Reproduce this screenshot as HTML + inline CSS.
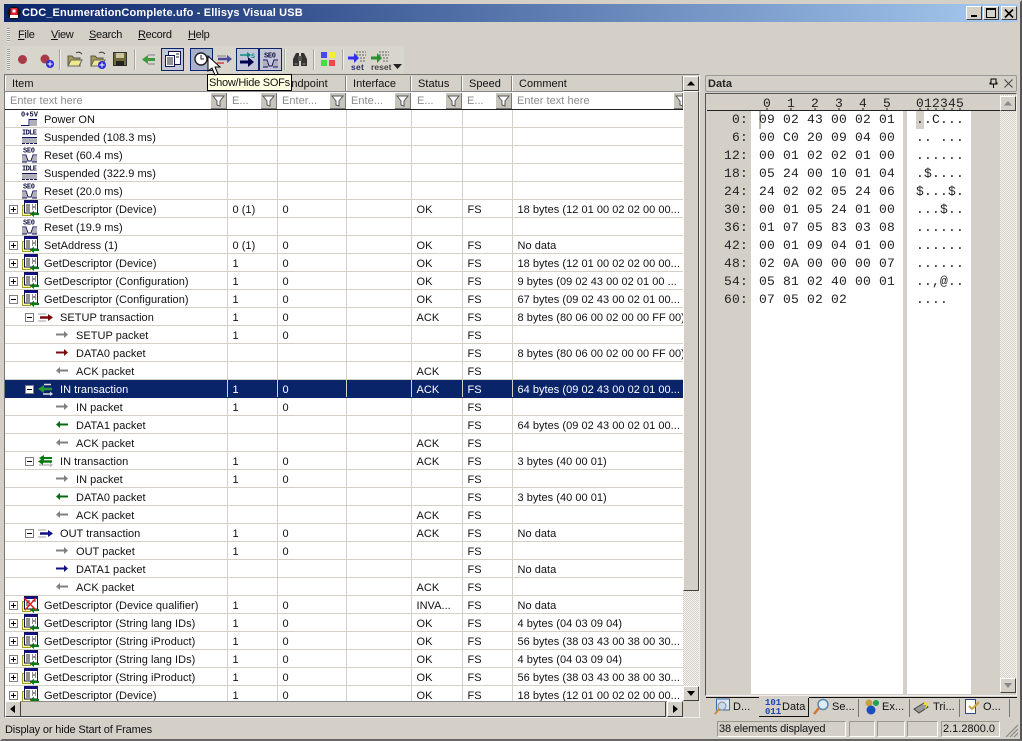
<!DOCTYPE html>
<html><head><meta charset="utf-8"><style>
html,body{margin:0;padding:0;width:1022px;height:741px;overflow:hidden;background:#d4d0c8}
body{position:relative;font:11px/13px "Liberation Sans",sans-serif;color:#111;letter-spacing:.03px}
.a{position:absolute}
svg{position:absolute;overflow:visible}
#title{left:4px;top:4px;width:1014px;height:18px;background:linear-gradient(90deg,#0a246a,#a6caf0);color:#fff;font-weight:bold;font-size:11px;line-height:18px;letter-spacing:.15px}
.wb{top:6px;width:16px;height:14px;background:#d4d0c8;border:1px solid;border-color:#fff #404040 #404040 #fff;box-sizing:border-box}
.menu{top:29px;font-size:11px;letter-spacing:-.3px}
.menu u{text-decoration:underline}
.sep{top:49px;width:0;height:21px;border-left:1px solid #a8a59e;border-right:1px solid #eee}
.sel{top:48px;width:23px;height:23px;box-sizing:border-box;border:1px solid #0a246a;background:#c4c6d8}
#wrap{left:5px;top:110px;width:678px;height:592px;overflow:hidden;background:#fff}
table{border-collapse:collapse;table-layout:fixed;width:678px}
#wrap td{height:13px;padding:4px 0 0 5px;border-right:1px solid #d4d0c8;border-bottom:1px solid #d4d0c8;white-space:nowrap;overflow:hidden;position:relative;line-height:13px;box-sizing:content-box}
#wrap td:first-child{padding-left:39px}
#wrap tr.l1 td:first-child{padding-left:55px}
#wrap tr.l2 td:first-child{padding-left:71px}
tr.s td{background:#0a246a;color:#fff;border-color:#0a246a #d4d0c8 #0a246a #0a246a!important}
.hd{top:76px;height:15px;line-height:17px;padding-left:6px;box-sizing:border-box;border-right:1px solid #808080;border-left:1px solid #fff}
.f{top:92px;height:17px;line-height:19px;background:#fff;color:#8a8a8a;padding-left:5px;box-sizing:border-box;overflow:hidden}
.fb{top:93px;width:16px;height:16px;background:#c8c5bd;border-right:1px solid #777;border-bottom:1px solid #777;box-sizing:border-box}
.hx{font:13px/18px "Liberation Mono",monospace;letter-spacing:.2px;color:#222;white-space:pre}
.tab{top:701px;font-size:11px}
.pn{top:721px;height:16px;border:1px solid;border-color:#9a978f #fff #fff #9a978f;box-sizing:border-box;line-height:15px;padding-left:1px;letter-spacing:-.15px}
.ts{width:0;height:18px;top:699px;border-left:1px solid #777}
.mn{font:bold 7.5px/8px "Liberation Mono",monospace;letter-spacing:0}
</style></head><body>
<svg width="0" height="0" style="position:absolute">
<defs>
<symbol id="p" viewBox="0 0 9 9"><rect x=".5" y=".5" width="8" height="8" fill="#fff" stroke="#808080"/><path d="M2 4.500h5M4.500 2v5" stroke="#000"/></symbol>
<symbol id="m" viewBox="0 0 9 9"><rect x=".5" y=".5" width="8" height="8" fill="#fff" stroke="#808080"/><path d="M2 4.500h5" stroke="#000"/></symbol>
<symbol id="d" viewBox="0 0 17 17"><rect x=".5" y="5.500" width="8" height="10" fill="#ffffa0" stroke="#a0a020"/><rect x="2.500" y=".5" width="13" height="12.500" fill="#fff" stroke="#101050"/><rect x="2.500" y=".5" width="13" height="2.500" fill="#101080"/><path d="M4 5h4M4 7h4M4 9h4M4 11h4M10 5h1M13 5h1M10 7h4M10 9h1M13 9h1" stroke="#222"/><path d="M17 14h-6" stroke="#0a7a10" stroke-width="2.200"/><path d="M12 10.500l-4 3.500 4 3z" fill="#0a7a10"/></symbol>
<symbol id="x" viewBox="0 0 17 17"><rect x=".5" y="5.500" width="8" height="10" fill="#ffffa0" stroke="#a0a020"/><rect x="2.500" y=".5" width="13" height="12.500" fill="#fff" stroke="#101050"/><rect x="2.500" y=".5" width="13" height="2.500" fill="#101080"/><path d="M4 5h4M4 7h4M4 9h4M10 5h4" stroke="#222"/><path d="M17 14h-6" stroke="#0a7a10" stroke-width="2.200"/><path d="M12 10.500l-4 3.500 4 3z" fill="#0a7a10"/><path d="M2 2l12 12M14 2L3 14" stroke="#e02020" stroke-width="1.500"/></symbol>
<symbol id="seo" viewBox="0 0 17 17"><text x="2" y="6.500" style="font:bold 7px 'Liberation Mono',monospace" fill="#101040" textLength="12">SE0</text><path d="M1 9h4l2 6h3l2-6h4" fill="none" stroke="#101060"/><path d="M1 10h4l1.500 6H1zM16 10h-4l-1.500 6H16z" fill="#b0b0b8"/><path d="M1 16h5M11 16h5" stroke="#101060"/></symbol>
<symbol id="idle" viewBox="0 0 17 17"><text x="1" y="6.500" style="font:bold 7px 'Liberation Mono',monospace" fill="#101040" textLength="15">IDLE</text><rect x="1" y="10" width="15" height="5" fill="#b0b0b8"/><path d="M1 9.500h15" stroke="#101060"/><path d="M1 15.500h15" stroke="#101060" stroke-dasharray="3 1"/></symbol>
<symbol id="pw" viewBox="0 0 17 17"><text x="0" y="6.500" style="font:bold 7px 'Liberation Mono',monospace" fill="#101040" textLength="17">0+5V</text><rect x="9" y="10" width="7" height="6" fill="#b0b0b8"/><path d="M0 15.500h8V9.500h8" fill="none" stroke="#101060"/></symbol>
<symbol id="gr" viewBox="0 0 12 7"><path d="M12 3.500H3" stroke="#808080" stroke-width="2"/><path d="M4 0L0 3.500 4 7z" fill="#808080"/></symbol>
<symbol id="ra" viewBox="0 0 12 7"><path d="M0 3.500h9" stroke="#808080" stroke-width="2"/><path d="M8 0l4 3.500L8 7z" fill="#808080"/></symbol>
<symbol id="rd" viewBox="0 0 12 7"><path d="M0 3.500h9" stroke="#7a0c10" stroke-width="2"/><path d="M8 0l4 3.500L8 7z" fill="#7a0c10"/></symbol>
<symbol id="gn" viewBox="0 0 12 7"><path d="M12 3.500H3" stroke="#0a6a10" stroke-width="2"/><path d="M4 0L0 3.500 4 7z" fill="#0a6a10"/></symbol>
<symbol id="bl" viewBox="0 0 12 7"><path d="M0 3.500h9" stroke="#101080" stroke-width="2"/><path d="M8 0l4 3.500L8 7z" fill="#101080"/></symbol>
<symbol id="tg" viewBox="0 0 15 13"><path d="M14 3H5" stroke="#0a7a10" stroke-width="2"/><path d="M6 0L1 3l5 3z" fill="#0a7a10"/><path d="M12 10H1" stroke="#bbb" stroke-width="1.500"/><path d="M12 7.500l3 2.500-3 2.500z" fill="#bbb"/><path d="M14 6.500H4" stroke="#0a7a10" stroke-width="2.500"/><path d="M5 3L0 6.500 5 10z" fill="#0a7a10"/></symbol>
<symbol id="ts" viewBox="0 0 15 13"><path d="M0 3h8M0 10h8" stroke="#c0c0c0" stroke-width="1.500"/><path d="M2 6.500h10" stroke="#7a0c10" stroke-width="2.500"/><path d="M10 3l5 3.500-5 3.500z" fill="#7a0c10"/></symbol>
<symbol id="tsel" viewBox="0 0 15 13"><path d="M14 6H5" stroke="#2a9a30" stroke-width="2.500"/><path d="M6 2L0 6l6 4z" fill="#2a9a30"/><path d="M6 1.500h7M5 11h8" stroke="#ddd" stroke-width="1.500"/><path d="M12 8.500l3 2.500-3 2z" fill="#ddd"/></symbol>
<symbol id="tblu" viewBox="0 0 15 13"><path d="M0 3h8M0 10h8" stroke="#c0c0c0" stroke-width="1.500"/><path d="M2 6.500h10" stroke="#101080" stroke-width="2.500"/><path d="M10 3l5 3.500-5 3.500z" fill="#101080"/></symbol>
<symbol id="fl" viewBox="0 0 13 13"><path d="M1 2h11L8 7v5l-3-1V7z" fill="#fff" stroke="#555"/></symbol>
</defs></svg>

<div class="a" style="left:0;top:0;width:1022px;height:741px;box-sizing:border-box;border:2px solid #d4d0c8;border-right-color:#555;border-bottom-color:#666"></div>
<div class="a" id="title"><span style="position:absolute;left:18px;white-space:nowrap">CDC_EnumerationComplete.ufo - Ellisys Visual USB</span>
<svg style="left:3px;top:2px" width="14" height="14"><circle cx="7" cy="7" r="6.500" fill="#111"/><rect x="3.500" y="2" width="7" height="7" fill="#e02030"/><rect x="5.500" y="3.500" width="3" height="3" fill="#fff"/><path d="M3 9h8v3H3z" fill="#fff"/></svg></div>
<div class="a wb" style="left:966px"><div class="a" style="left:4px;top:8px;width:6px;height:2px;background:#000"></div></div>
<div class="a wb" style="left:983px"><div class="a" style="left:2px;top:1px;width:10px;height:10px;box-sizing:border-box;border:1px solid #000;border-top-width:2px"></div></div>
<div class="a wb" style="left:1001px"><svg style="left:2px;top:2px" width="10" height="9"><path d="M1 .5l8 8M9 .5l-8 8" stroke="#000" stroke-width="1.600"/></svg></div>

<div class="a" style="left:7px;top:28px;width:3px;height:14px;background:repeating-linear-gradient(#999 0 1px,#eee 1px 2px)"></div>
<div class="a menu" style="left:18px"><u>F</u>ile</div>
<div class="a menu" style="left:51px"><u>V</u>iew</div>
<div class="a menu" style="left:89px"><u>S</u>earch</div>
<div class="a menu" style="left:138px"><u>R</u>ecord</div>
<div class="a menu" style="left:188px"><u>H</u>elp</div>

<div class="a" style="left:5px;top:46px;width:399px;height:27px;background:#d8d5cd"></div>
<div class="a" style="left:7px;top:49px;width:3px;height:21px;background:repeating-linear-gradient(#999 0 1px,#eee 1px 2px)"></div>
<div class="a sep" style="left:59px"></div><div class="a sep" style="left:134px"></div><div class="a sep" style="left:284px"></div><div class="a sep" style="left:313px"></div><div class="a sep" style="left:342px"></div>
<svg style="left:0;top:0" width="410" height="75">
<circle cx="22.500" cy="59.500" r="4.500" fill="#a83a48"/><circle cx="45" cy="59" r="4.500" fill="#a83a48"/><circle cx="50" cy="64" r="4" fill="#2828d8"/><path d="M47.500 64h5M50 61.500v5" stroke="#fff"/>
<path d="M68 56h4l2 2h6v8H68z" fill="#a89a50" stroke="#555"/><path d="M68 66l3-6h11l-3 6z" fill="#f0e88c" stroke="#666"/><path d="M76 53q3-2 6 1" fill="none" stroke="#444"/>
<path d="M91 56h4l2 2h6v8H91z" fill="#a89a50" stroke="#555"/><path d="M91 66l3-6h11l-3 6z" fill="#f0e88c" stroke="#666"/><path d="M99 53q3-2 6 1" fill="none" stroke="#444"/><circle cx="102" cy="65" r="4" fill="#2828d8"/><path d="M99.500 65h5M102 62.500v5" stroke="#fff"/>
<rect x="113.500" y="52.500" width="13" height="13" fill="#6e6a3a" stroke="#333"/><rect x="116" y="53" width="8" height="5" fill="#c8c5a0"/><rect x="116" y="61" width="8" height="5" fill="#222"/>
<path d="M148 55h7M148 64h7" stroke="#aaa" stroke-width="2"/><path d="M147 59.500h8" stroke="#3a9a40" stroke-width="3"/><path d="M148 55l-6 4.500 6 4.500z" fill="#3a9a40"/>
</svg>
<div class="a sel" style="left:161px"></div>
<svg style="left:165px;top:51px" width="16" height="16"><rect x="3.500" y=".5" width="12" height="13" fill="#fff" stroke="#101050"/><rect x=".5" y="4.500" width="9" height="11" fill="#fff" stroke="#101050"/><path d="M2 7h6M2 9h6M2 11h6M2 13h6M11 3h3M11 6h3" stroke="#222"/></svg>
<div class="a sel" style="left:190px;background:#a9b0cc"></div>
<svg style="left:194px;top:51px" width="16" height="16"><circle cx="7" cy="8" r="6" fill="#fff" stroke="#222" stroke-width="1.400"/><path d="M7 4v4h3" fill="none" stroke="#222"/></svg>
<svg style="left:216px;top:53px" width="16" height="14"><path d="M1 3h9" stroke="#aaa" stroke-width="2"/><path d="M2 6h10" stroke="#4a4a9a" stroke-width="2.500"/><path d="M11 2l5 4-5 4z" fill="#4a4a9a"/><path d="M1 10h7" stroke="#d04040" stroke-width="1.500"/></svg>
<div class="a sel" style="left:236px"></div>
<svg style="left:239px;top:51px" width="18" height="17"><path d="M1 4h8" stroke="#0a8a80" stroke-width="1.500"/><path d="M8 1l4 3-4 3z" fill="#0a8a80"/><text x="12" y="7" style="font:bold 6px 'Liberation Sans'" fill="#0a8a80">S</text><path d="M1 11h10" stroke="#000050" stroke-width="3"/><path d="M9 6l6 5-6 5z" fill="#000050"/></svg>
<div class="a sel" style="left:259px"></div>
<svg style="left:262px;top:51px" width="17" height="17"><use href="#seo"/></svg>
<svg style="left:292px;top:52px" width="16" height="15"><path d="M1 14V7l3-6h3v13zM15 14V7l-3-6H9v13z" fill="#333"/><rect x="6" y="4" width="4" height="5" fill="#555"/><path d="M2.500 12h3M10.500 12h3" stroke="#999"/></svg>
<svg style="left:321px;top:52px" width="14" height="14"><rect width="6" height="6" fill="#4848e8"/><rect x="8" width="6" height="6" fill="#f4f030"/><rect y="8" width="6" height="6" fill="#40e040"/><rect x="8" y="8" width="6" height="6" fill="#f04848"/></svg>
<svg style="left:348px;top:50px" width="20" height="22"><path d="M0 8h7" stroke="#3030f0" stroke-width="3"/><path d="M6 3l5 5-5 5z" fill="#3030f0"/><path d="M8 2h10M8 5h10M12 8h6M12 11h6" stroke="#666" stroke-dasharray="2 1"/></svg>
<svg style="left:371px;top:50px" width="20" height="22"><path d="M0 8h7" stroke="#2a9030" stroke-width="3"/><path d="M6 3l5 5-5 5z" fill="#2a9030"/><path d="M8 2h10M8 5h10M12 8h6M12 11h6" stroke="#666" stroke-dasharray="2 1"/></svg>
<div class="a" style="left:351px;top:62px;font-size:8.500px;line-height:10px;color:#2a2a70;font-weight:bold;letter-spacing:.3px">set</div>
<div class="a" style="left:371px;top:62px;font-size:8.500px;line-height:10px;color:#444;font-weight:bold">reset</div>
<svg style="left:393px;top:64px" width="9" height="5"><path d="M0 0h9L4.500 5z" fill="#222"/></svg>

<div class="a" style="left:4px;top:74px;width:696px;height:644px;box-sizing:border-box;border:1px solid #777;border-right-color:#eee;border-bottom-color:#eee"></div>
<div class="a" style="left:5px;top:75px;width:678px;height:17px;background:#d4d0c8;border-bottom:1px solid #888;box-sizing:border-box"></div>
<div class="a hd" style="left:5px;width:222px">Item</div>
<div class="a hd" style="left:227px;width:50px"></div>
<div class="a hd" style="left:277px;width:69px">Endpoint</div>
<div class="a hd" style="left:346px;width:65px">Interface</div>
<div class="a hd" style="left:411px;width:51px">Status</div>
<div class="a hd" style="left:462px;width:50px">Speed</div>
<div class="a hd" style="left:512px;width:171px">Comment</div>

<div class="a" style="left:5px;top:92px;width:678px;height:18px;background:#fff;border-bottom:1px solid #222;box-sizing:border-box"></div>
<div class="a f" style="left:5px;width:205px">Enter text here</div><div class="a fb" style="left:211px"><svg style="left:1px;top:1px" width="13" height="13"><use href="#fl"/></svg></div>
<div class="a f" style="left:227px;width:33px">E...</div><div class="a fb" style="left:261px"><svg style="left:1px;top:1px" width="13" height="13"><use href="#fl"/></svg></div>
<div class="a f" style="left:277px;width:52px">Enter...</div><div class="a fb" style="left:330px"><svg style="left:1px;top:1px" width="13" height="13"><use href="#fl"/></svg></div>
<div class="a f" style="left:346px;width:48px">Ente...</div><div class="a fb" style="left:395px"><svg style="left:1px;top:1px" width="13" height="13"><use href="#fl"/></svg></div>
<div class="a f" style="left:412px;width:33px">E...</div><div class="a fb" style="left:446px"><svg style="left:1px;top:1px" width="13" height="13"><use href="#fl"/></svg></div>
<div class="a f" style="left:462px;width:33px">E...</div><div class="a fb" style="left:496px"><svg style="left:1px;top:1px" width="13" height="13"><use href="#fl"/></svg></div>
<div class="a f" style="left:512px;width:155px">Enter text here</div><div class="a fb" style="left:674px;width:9px;overflow:hidden"><svg style="left:1px;top:1px" width="13" height="13"><use href="#fl"/></svg></div>

<div class="a" id="wrap"><table>
<colgroup><col style="width:222px"><col style="width:50px"><col style="width:69px"><col style="width:65px"><col style="width:51px"><col style="width:50px"><col style="width:171px"></colgroup>
<tr><td>Power ON<td><td><td><td><td><td></tr>
<tr><td>Suspended (108.3 ms)<td><td><td><td><td><td></tr>
<tr><td>Reset (60.4 ms)<td><td><td><td><td><td></tr>
<tr><td>Suspended (322.9 ms)<td><td><td><td><td><td></tr>
<tr><td>Reset (20.0 ms)<td><td><td><td><td><td></tr>
<tr><td>GetDescriptor (Device)<td>0 (1)<td>0<td><td>OK<td>FS<td>18 bytes (12 01 00 02 02 00 00...</tr>
<tr><td>Reset (19.9 ms)<td><td><td><td><td><td></tr>
<tr><td>SetAddress (1)<td>0 (1)<td>0<td><td>OK<td>FS<td>No data</tr>
<tr><td>GetDescriptor (Device)<td>1<td>0<td><td>OK<td>FS<td>18 bytes (12 01 00 02 02 00 00...</tr>
<tr><td>GetDescriptor (Configuration)<td>1<td>0<td><td>OK<td>FS<td>9 bytes (09 02 43 00 02 01 00 ...</tr>
<tr><td>GetDescriptor (Configuration)<td>1<td>0<td><td>OK<td>FS<td>67 bytes (09 02 43 00 02 01 00...</tr>
<tr class="l1"><td>SETUP transaction<td>1<td>0<td><td>ACK<td>FS<td>8 bytes (80 06 00 02 00 00 FF 00)</tr>
<tr class="l2"><td>SETUP packet<td>1<td>0<td><td><td>FS<td></tr>
<tr class="l2"><td>DATA0 packet<td><td><td><td><td>FS<td>8 bytes (80 06 00 02 00 00 FF 00)</tr>
<tr class="l2"><td>ACK packet<td><td><td><td>ACK<td>FS<td></tr>
<tr class="l1 s"><td>IN transaction<td>1<td>0<td><td>ACK<td>FS<td>64 bytes (09 02 43 00 02 01 00...</tr>
<tr class="l2"><td>IN packet<td>1<td>0<td><td><td>FS<td></tr>
<tr class="l2"><td>DATA1 packet<td><td><td><td><td>FS<td>64 bytes (09 02 43 00 02 01 00...</tr>
<tr class="l2"><td>ACK packet<td><td><td><td>ACK<td>FS<td></tr>
<tr class="l1"><td>IN transaction<td>1<td>0<td><td>ACK<td>FS<td>3 bytes (40 00 01)</tr>
<tr class="l2"><td>IN packet<td>1<td>0<td><td><td>FS<td></tr>
<tr class="l2"><td>DATA0 packet<td><td><td><td><td>FS<td>3 bytes (40 00 01)</tr>
<tr class="l2"><td>ACK packet<td><td><td><td>ACK<td>FS<td></tr>
<tr class="l1"><td>OUT transaction<td>1<td>0<td><td>ACK<td>FS<td>No data</tr>
<tr class="l2"><td>OUT packet<td>1<td>0<td><td><td>FS<td></tr>
<tr class="l2"><td>DATA1 packet<td><td><td><td><td>FS<td>No data</tr>
<tr class="l2"><td>ACK packet<td><td><td><td>ACK<td>FS<td></tr>
<tr><td>GetDescriptor (Device qualifier)<td>1<td>0<td><td>INVA...<td>FS<td>No data</tr>
<tr><td>GetDescriptor (String lang IDs)<td>1<td>0<td><td>OK<td>FS<td>4 bytes (04 03 09 04)</tr>
<tr><td>GetDescriptor (String iProduct)<td>1<td>0<td><td>OK<td>FS<td>56 bytes (38 03 43 00 38 00 30...</tr>
<tr><td>GetDescriptor (String lang IDs)<td>1<td>0<td><td>OK<td>FS<td>4 bytes (04 03 09 04)</tr>
<tr><td>GetDescriptor (String iProduct)<td>1<td>0<td><td>OK<td>FS<td>56 bytes (38 03 43 00 38 00 30...</tr>
<tr><td>GetDescriptor (Device)<td>1<td>0<td><td>OK<td>FS<td>18 bytes (12 01 00 02 02 00 00...</tr>
</table>
<svg style="left:0;top:0" width="80" height="592">
<use href="#pw" x="16" y="0" width="17" height="17"/>
<use href="#idle" x="16" y="18" width="17" height="17"/>
<use href="#seo" x="16" y="36" width="17" height="17"/>
<use href="#idle" x="16" y="54" width="17" height="17"/>
<use href="#seo" x="16" y="72" width="17" height="17"/>
<use href="#p" x="4" y="95" width="9" height="9"/><use href="#d" x="17" y="90" width="17" height="17"/>
<use href="#seo" x="16" y="108" width="17" height="17"/>
<use href="#p" x="4" y="131" width="9" height="9"/><use href="#d" x="17" y="126" width="17" height="17"/>
<use href="#p" x="4" y="149" width="9" height="9"/><use href="#d" x="17" y="144" width="17" height="17"/>
<use href="#p" x="4" y="167" width="9" height="9"/><use href="#d" x="17" y="162" width="17" height="17"/>
<use href="#m" x="4" y="185" width="9" height="9"/><use href="#d" x="17" y="180" width="17" height="17"/>
<use href="#m" x="20" y="203" width="9" height="9"/><use href="#ts" x="33" y="201" width="15" height="13"/>
<use href="#ra" x="51" y="221" width="12" height="7"/>
<use href="#rd" x="51" y="239" width="12" height="7"/>
<use href="#gr" x="51" y="257" width="12" height="7"/>
<use href="#m" x="20" y="275" width="9" height="9"/><use href="#tsel" x="33" y="273" width="15" height="13"/>
<use href="#ra" x="51" y="293" width="12" height="7"/>
<use href="#gn" x="51" y="311" width="12" height="7"/>
<use href="#gr" x="51" y="329" width="12" height="7"/>
<use href="#m" x="20" y="347" width="9" height="9"/><use href="#tg" x="33" y="345" width="15" height="13"/>
<use href="#ra" x="51" y="365" width="12" height="7"/>
<use href="#gn" x="51" y="383" width="12" height="7"/>
<use href="#gr" x="51" y="401" width="12" height="7"/>
<use href="#m" x="20" y="419" width="9" height="9"/><use href="#tblu" x="33" y="417" width="15" height="13"/>
<use href="#ra" x="51" y="437" width="12" height="7"/>
<use href="#bl" x="51" y="455" width="12" height="7"/>
<use href="#gr" x="51" y="473" width="12" height="7"/>
<use href="#p" x="4" y="491" width="9" height="9"/><use href="#x" x="17" y="486" width="17" height="17"/>
<use href="#p" x="4" y="509" width="9" height="9"/><use href="#d" x="17" y="504" width="17" height="17"/>
<use href="#p" x="4" y="527" width="9" height="9"/><use href="#d" x="17" y="522" width="17" height="17"/>
<use href="#p" x="4" y="545" width="9" height="9"/><use href="#d" x="17" y="540" width="17" height="17"/>
<use href="#p" x="4" y="563" width="9" height="9"/><use href="#d" x="17" y="558" width="17" height="17"/>
<use href="#p" x="4" y="581" width="9" height="9"/><use href="#d" x="17" y="576" width="17" height="17"/>
</svg></div>

<!-- vertical scrollbar -->
<div class="a" style="left:683px;top:76px;width:16px;height:625px;background:repeating-conic-gradient(#d4d0c8 0 25%,#f4f3ef 0 50%) 0 0/2px 2px"></div>
<div class="a wb" style="left:683px;top:76px;height:15px"><svg style="left:3px;top:4px" width="8" height="5"><path d="M0 4.500h8L4 0z" fill="#000"/></svg></div>
<div class="a" style="left:683px;top:91px;width:16px;height:500px;background:#d4d0c8;box-sizing:border-box;border:1px solid;border-color:#fff #404040 #404040 #fff"></div>
<div class="a wb" style="left:683px;top:686px;height:15px"><svg style="left:3px;top:4px" width="8" height="5"><path d="M0 0h8L4 5z" fill="#000"/></svg></div>
<!-- horizontal scrollbar -->
<div class="a" style="left:5px;top:701px;width:678px;height:16px;background:#d4d0c8;border-top:1px solid #888;box-sizing:border-box"></div>
<div class="a wb" style="left:5px;top:701px;height:16px"><svg style="left:4px;top:3px" width="5" height="8"><path d="M5 0v8L0 4z" fill="#000"/></svg></div>
<div class="a" style="left:21px;top:702px;width:645px;height:15px;box-sizing:border-box;border-bottom:1px solid #404040;border-right:1px solid #404040"></div>
<div class="a wb" style="left:667px;top:701px;height:16px"><svg style="left:5px;top:3px" width="5" height="8"><path d="M0 0v8l5-4z" fill="#000"/></svg></div>

<!-- Tooltip -->
<div class="a" style="left:207px;top:74px;width:85px;height:17px;background:#ffffe1;border:1px solid #000;box-sizing:border-box;line-height:17px;padding-left:1px;white-space:nowrap;letter-spacing:-.25px">Show/Hide SOFs</div>
<svg style="left:207px;top:55px" width="14" height="21"><path d="M1 1v15l4-3 3 7 3-1-3-7h5z" fill="#fff" stroke="#000"/></svg>

<!-- Data pane -->
<div class="a" style="left:705px;top:75px;width:312px;height:17px;border:1px solid #999;box-sizing:border-box;border-radius:2px"></div>
<div class="a" style="left:708px;top:78px;font-weight:bold;font-size:11px;color:#222">Data</div>
<svg style="left:989px;top:78px" width="9" height="10"><path d="M2 1h5v4h1v1H1V5h1zM4.500 6v4" stroke="#000" fill="none"/></svg>
<svg style="left:1004px;top:79px" width="9" height="9"><path d="M.5.5l8 8M8.500.5l-8 8" stroke="#444"/></svg>
<div class="a" style="left:705px;top:93px;width:312px;height:603px;box-sizing:border-box;border:1px solid #555;border-right-color:#eee;border-bottom-color:#eee"></div>
<div class="a" style="left:707px;top:95px;width:293px;height:16px;background:#d4d0c8;border-bottom:1px solid #222;box-sizing:border-box"></div>
<div class="a" style="left:751px;top:111px;width:152px;height:583px;background:#fff"></div>
<div class="a" style="left:907px;top:111px;width:64px;height:583px;background:#fff"></div>
<div class="a" style="left:1000px;top:95px;width:16px;height:598px;background:repeating-conic-gradient(#d4d0c8 0 25%,#f4f3ef 0 50%) 0 0/2px 2px"></div>
<div class="a wb" style="left:1000px;top:96px;height:15px"><svg style="left:3px;top:4px" width="8" height="5"><path d="M0 4.500h8L4 0z" fill="#888"/></svg></div>
<div class="a wb" style="left:1000px;top:678px;height:15px"><svg style="left:3px;top:4px" width="8" height="5"><path d="M0 0h8L4 5z" fill="#888"/></svg></div>
<div class="a hx" style="left:763px;top:95px">0  1  2  3  4  5</div>
<div class="a hx" style="left:916px;top:95px">012345</div>
<svg style="left:0;top:0" width="1000" height="115"><path d="M767 108v3M791 108v3M815 108v3M839 108v3M863 108v3M887 108v3M920 108v3M928 108v3M936 108v3M944 108v3M952 108v3M960 108v3" stroke="#222"/></svg>
<div class="a" style="left:916px;top:111px;width:8px;height:18px;background:#d4d0c8"></div>
<div class="a" style="left:759px;top:111px;width:2px;height:18px;background:#b8b5ad"></div>
<div class="a hx" style="left:707px;top:111px;width:41px;text-align:right">0:
6:
12:
18:
24:
30:
36:
42:
48:
54:
60:</div>
<div class="a hx" style="left:759px;top:111px">09 02 43 00 02 01
00 C0 20 09 04 00
00 01 02 02 01 00
05 24 00 10 01 04
24 02 02 05 24 06
00 01 05 24 01 00
01 07 05 83 03 08
00 01 09 04 01 00
02 0A 00 00 00 07
05 81 02 40 00 01
07 05 02 02</div>
<div class="a hx" style="left:916px;top:111px">..C...
.. ...
......
.$....
$...$.
...$..
......
......
......
..,@..
....</div>

<!-- Tabs -->
<div class="a" style="left:706px;top:697px;width:311px;height:1px;background:#111"></div>
<div class="a" style="left:759px;top:697px;width:50px;height:20px;background:#d4d0c8;border-bottom:1px solid #111;border-right:1px solid #111;box-sizing:border-box"></div>
<div class="a" style="left:759px;top:697px;width:50px;height:1px;background:#d4d0c8"></div>
<div class="a ts" style="left:858px"></div><div class="a ts" style="left:909px"></div><div class="a ts" style="left:959px"></div><div class="a ts" style="left:1009px"></div>
<svg style="left:714px;top:698px" width="16" height="17"><rect x="2.500" y="1" width="13" height="11" fill="#dce8f8" stroke="#3a6ab0"/><circle cx="8" cy="8" r="4" fill="#c8dcf0" stroke="#888"/><path d="M5 11l-4 5" stroke="#d08830" stroke-width="2"/></svg>
<div class="a tab" style="left:733px">D...</div>
<div class="a mn" style="left:765px;top:699px;width:15px;color:#1a4ab0;font-size:9px;line-height:8.500px">101<br>011</div>
<div class="a tab" style="left:782px">Data</div>
<svg style="left:813px;top:698px" width="17" height="17"><circle cx="10" cy="6.500" r="5" fill="#dcecf8" stroke="#5a88b0" stroke-width="1.500"/><path d="M6 10l-5 6" stroke="#d07830" stroke-width="2.500"/></svg>
<div class="a tab" style="left:832px">Se...</div>
<svg style="left:863px;top:698px" width="18" height="17"><circle cx="6" cy="5" r="3.500" fill="#c8a040"/><circle cx="13" cy="5" r="3" fill="#20a050"/><circle cx="8" cy="12" r="4.500" fill="#1850c0"/></svg>
<div class="a tab" style="left:882px">Ex...</div>
<svg style="left:913px;top:698px" width="17" height="17"><path d="M1 11l10-6 4 4-9 6z" fill="#999" stroke="#444"/><path d="M13 1l-3 6h3l-1 5 4-7h-3z" fill="#f0d840"/></svg>
<div class="a tab" style="left:933px">Tri...</div>
<svg style="left:964px;top:698px" width="16" height="17"><rect x="1.500" y="1.500" width="10" height="14" fill="#fff" stroke="#2a4a90"/><path d="M5 8l3 3 7-7" fill="none" stroke="#d0a030" stroke-width="2"/></svg>
<div class="a tab" style="left:983px">O...</div>

<!-- Status bar -->
<div class="a" style="left:5px;top:724px;font-size:11px;letter-spacing:-.15px">Display or hide Start of Frames</div>
<div class="a pn" style="left:717px;width:129px">38 elements displayed</div>
<div class="a pn" style="left:849px;width:26px"></div>
<div class="a pn" style="left:877px;width:28px"></div>
<div class="a pn" style="left:907px;width:31px"></div>
<div class="a pn" style="left:941px;width:59px;letter-spacing:0">2.1.2800.0</div>
<svg style="left:1005px;top:724px" width="14" height="14"><path d="M13 1L1 13M13 5l-8 8M13 9l-4 4" stroke="#888" stroke-width="1.200"/></svg>
</body></html>
